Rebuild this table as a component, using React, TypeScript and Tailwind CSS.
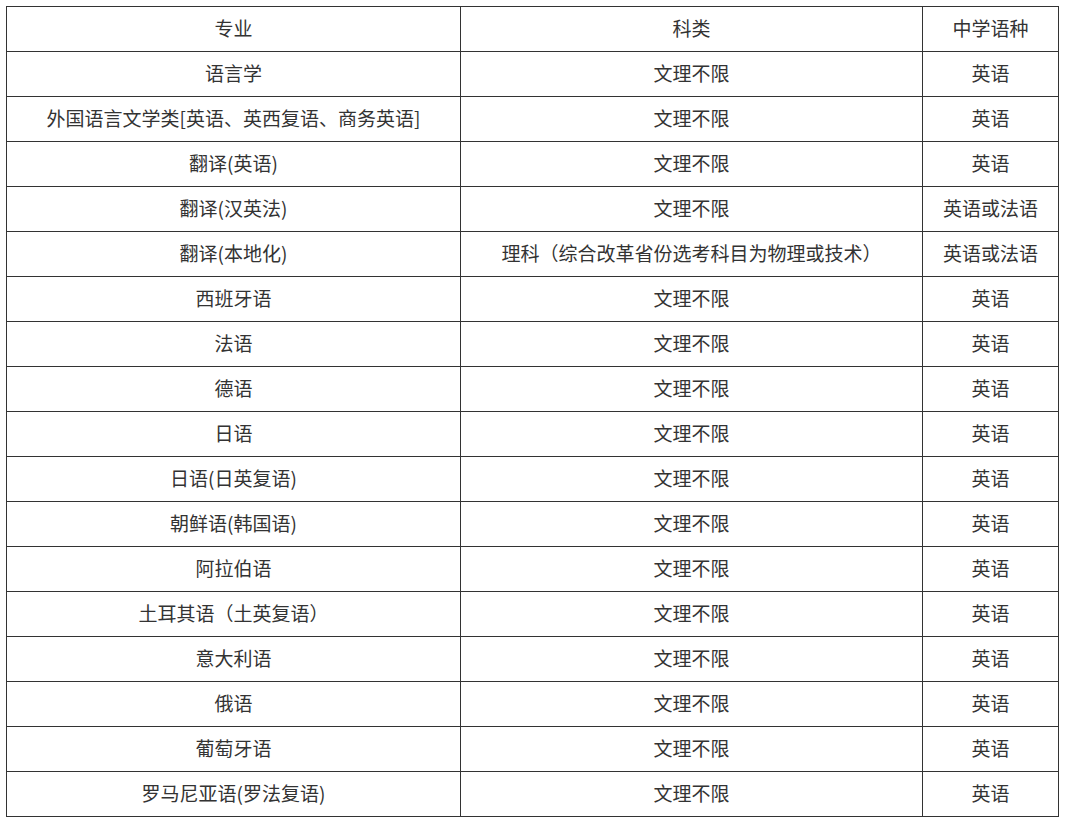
const rows: [string, string, string][] = [
  ['语言学', '文理不限', '英语'],
  ['外国语言文学类[英语、英西复语、商务英语]', '文理不限', '英语'],
  ['翻译(英语)', '文理不限', '英语'],
  ['翻译(汉英法)', '文理不限', '英语或法语'],
  ['翻译(本地化)', '理科（综合改革省份选考科目为物理或技术）', '英语或法语'],
  ['西班牙语', '文理不限', '英语'],
  ['法语', '文理不限', '英语'],
  ['德语', '文理不限', '英语'],
  ['日语', '文理不限', '英语'],
  ['日语(日英复语)', '文理不限', '英语'],
  ['朝鲜语(韩国语)', '文理不限', '英语'],
  ['阿拉伯语', '文理不限', '英语'],
  ['土耳其语（土英复语）', '文理不限', '英语'],
  ['意大利语', '文理不限', '英语'],
  ['俄语', '文理不限', '英语'],
  ['葡萄牙语', '文理不限', '英语'],
  ['罗马尼亚语(罗法复语)', '文理不限', '英语'],
];

export default function App() {
  return (
    <div className="bg-white min-h-screen p-[6px] text-[#333] font-['Noto_Sans_CJK_SC',sans-serif]">
      <table className="w-[1052px] table-fixed border-collapse text-[19px] leading-none">
        <colgroup>
          <col className="w-[454px]" />
          <col className="w-[462px]" />
          <col className="w-[136px]" />
        </colgroup>
        <thead>
          <tr className="h-[45px]">
            <th className="border border-[#333] font-normal text-center pb-[3px]">专业</th>
            <th className="border border-[#333] font-normal text-center pb-[3px]">科类</th>
            <th className="border border-[#333] font-normal text-center pb-[3px]">中学语种</th>
          </tr>
        </thead>
        <tbody>
          {rows.map((r, i) => (
            <tr key={i} className="h-[45px]">
              <td className="border border-[#333] text-center pb-[3px]">{r[0]}</td>
              <td className="border border-[#333] text-center pb-[3px]">{r[1]}</td>
              <td className="border border-[#333] text-center pb-[3px]">{r[2]}</td>
            </tr>
          ))}
        </tbody>
      </table>
    </div>
  );
}
